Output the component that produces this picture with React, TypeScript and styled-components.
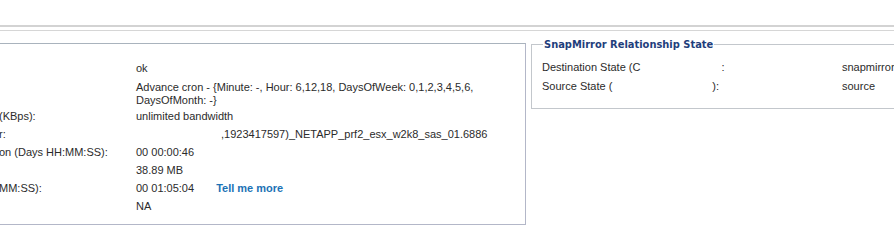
import React from 'react';
import styled, { createGlobalStyle } from 'styled-components';

const GlobalStyle = createGlobalStyle`
  html, body {
    margin: 0;
    padding: 0;
    background: #ffffff;
    overflow: hidden;
  }
  body {
    font-family: 'Liberation Sans', Arial, sans-serif;
    font-size: 11px;
    color: #2b2b2b;
  }
`;

const Page = styled.div`
  width: 894px;
  height: 245px;
  padding-top: 25px;
  box-sizing: border-box;
`;

const Rule = styled.div<{ $thick?: boolean }>`
  height: ${(p) => (p.$thick ? 2 : 1)}px;
  background: ${(p) => (p.$thick ? '#d3d3d3' : '#d6d6d6')};
  margin-bottom: ${(p) => (p.$thick ? 3 : 0)}px;
`;

const Columns = styled.div`
  display: flex;
  align-items: flex-start;
  gap: 5px;
  margin-top: 6px;
`;

const DetailPanel = styled.section`
  flex: none;
  width: 536px;
  margin-left: -10px;
  margin-top: 6px;
  border: 1px solid #b3b7c8;
  border-top-color: #a9b3bd;
  padding: 15px 7px 14px;
  box-sizing: border-box;
  height: 182px;
  overflow: hidden;
`;

const Grid = styled.div`
  display: grid;
  grid-template-columns: 138px 1fr;
`;

const Label = styled.div`
  white-space: nowrap;
  line-height: 14px;
  padding: 2px 0;
  margin-left: 1px;
`;

const Value = styled.div<{ $indent?: number; $multi?: boolean }>`
  display: flex;
  align-items: baseline;
  gap: 22px;
  line-height: ${(p) => (p.$multi ? 13 : 14)}px;
  padding: ${(p) => (p.$multi ? '4px 0 0' : '2px 0')};
  padding-left: ${(p) => p.$indent ?? 0}px;
`;

const Link = styled.a`
  color: #1b72b5;
  font-weight: bold;
  text-decoration: none;
  cursor: pointer;
`;

const StateSet = styled.fieldset`
  flex: 1;
  margin: 1px -20px 0 0;
  padding: 7px 10px 12px 10px;
  border: 1px solid #c3c7cc;
  min-width: 0;
`;

const Legend = styled.legend`
  padding: 0 1px;
  margin-left: 1px;
  font-family: 'DejaVu Sans', 'Liberation Sans', sans-serif;
  font-stretch: condensed;
  font-weight: bold;
  font-size: 11px;
  color: #1f3e7c;
`;

const StateRow = styled.div`
  display: grid;
  grid-template-columns: 300px 1fr;
  line-height: 14px;
  padding: 2px 0 3px;
  white-space: nowrap;
`;

const Hidden = styled.span<{ $w: number }>`
  display: inline-block;
  width: ${(p) => p.$w}px;
`;

const details: { label: string; value: React.ReactNode; indent?: number; multi?: boolean }[] = [
  { label: '', value: 'ok' },
  {
    label: '',
    multi: true,
    value: (
      <span>
        Advance cron - {'{'}Minute: -, Hour: 6,12,18, DaysOfWeek: 0,1,2,3,4,5,6,
        <br />
        DaysOfMonth: -{'}'}
      </span>
    ),
  },
  { label: '(KBps):', value: 'unlimited bandwidth' },
  { label: 'r:', value: ',1923417597)_NETAPP_prf2_esx_w2k8_sas_01.6886', indent: 85 },
  { label: 'on (Days HH:MM:SS):', value: '00 00:00:46' },
  { label: '', value: '38.89 MB' },
  {
    label: 'MM:SS):',
    value: (
      <>
        <span>00 01:05:04</span>
        <Link>Tell me more</Link>
      </>
    ),
  },
  { label: '', value: 'NA' },
];

const App: React.FC = () => {
  return (
    <Page>
      <GlobalStyle />
      <Rule $thick />
      <Rule />
      <Columns>
        <DetailPanel>
          <Grid>
            {details.map((d, i) => (
              <React.Fragment key={i}>
                <Label>{d.label || '\u00a0'}</Label>
                <Value $indent={d.indent} $multi={d.multi}>
                  {d.value}
                </Value>
              </React.Fragment>
            ))}
          </Grid>
        </DetailPanel>
        <StateSet>
          <Legend>SnapMirror Relationship State</Legend>
          <StateRow>
            <span>
              Destination State (C<Hidden $w={81} />:
            </span>
            <span>snapmirrored</span>
          </StateRow>
          <StateRow>
            <span>
              Source State (<Hidden $w={100} />):
            </span>
            <span>source</span>
          </StateRow>
        </StateSet>
      </Columns>
    </Page>
  );
};

export default App;
